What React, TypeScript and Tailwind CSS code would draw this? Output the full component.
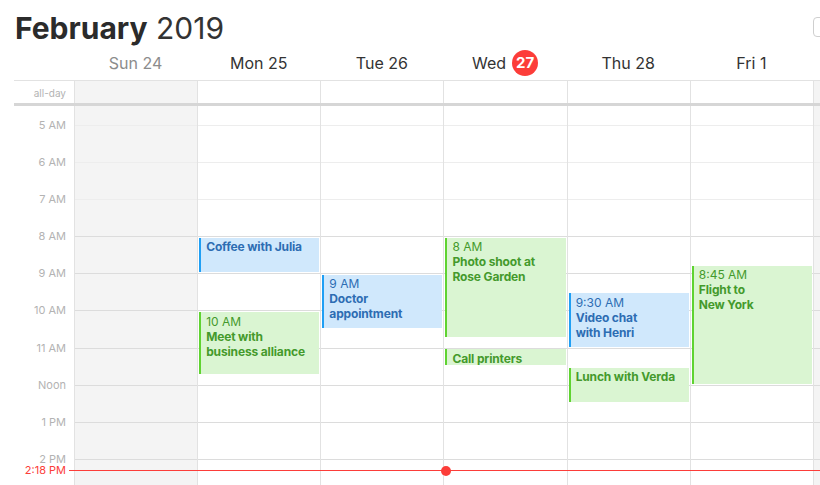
const HOUR = 37.1;
const FIRST_HOUR = 4;

type Ev = {
  day: number;
  start: number;
  end: number;
  title: string[];
  time?: string;
  color: 'blue' | 'green';
};

const events: Ev[] = [
  { day: 1, start: 8, end: 9, title: ['Coffee with Julia'], color: 'blue' },
  { day: 1, start: 10, end: 11.75, time: '10 AM', title: ['Meet with', 'business alliance'], color: 'green' },
  { day: 2, start: 9, end: 10.5, time: '9 AM', title: ['Doctor', 'appointment'], color: 'blue' },
  { day: 3, start: 8, end: 10.75, time: '8 AM', title: ['Photo shoot at', 'Rose Garden'], color: 'green' },
  { day: 3, start: 11, end: 11.5, title: ['Call printers'], color: 'green' },
  { day: 4, start: 9.5, end: 11, time: '9:30 AM', title: ['Video chat', 'with Henri'], color: 'blue' },
  { day: 4, start: 11.5, end: 12.5, title: ['Lunch with Verda'], color: 'green' },
  { day: 5, start: 8.75, end: 12, time: '8:45 AM', title: ['Flight to', 'New York'], color: 'green' },
];

const days = ['Sun 24', 'Mon 25', 'Tue 26', 'Wed', 'Thu 28', 'Fri 1'];
// rows start at 4 AM (scrolled out of view), labels only for the visible ones
const hours = ['', '5 AM', '6 AM', '7 AM', '8 AM', '9 AM', '10 AM', '11 AM', 'Noon', '1 PM', '2 PM', '', ''];

function EventBox({ ev }: { ev: Ev }) {
  const blue = ev.color === 'blue';
  return (
    <div
      className={`absolute left-[1px] right-[1px] border-l-2 pl-[5px] pt-[1.5px] text-[12px] leading-[15px] overflow-hidden ${
        blue ? 'bg-[#d0e8fc] border-[#1f9ff4] text-[#2d6db3]' : 'bg-[#daf5d2] border-[#5fd331] text-[#449a2c]'
      }`}
      style={{
        top: (ev.start - FIRST_HOUR) * HOUR + 1.5,
        height: (ev.end - ev.start) * HOUR - 2.5,
      }}
    >
      {ev.time && <div>{ev.time}</div>}
      {ev.title.map((t) => (
        <div key={t} className="font-bold tracking-[-0.15px]">{t}</div>
      ))}
    </div>
  );
}

export default function App() {
  return (
    <div className="relative w-[820px] h-[485px] overflow-hidden bg-white font-['Inter',sans-serif] text-[#2b2b2b]">
      {/* title + search field */}
      <div className="flex h-[46px]">
        <div className="w-[813px] shrink-0 pl-[15px] pt-[10px] text-[30px] leading-[36px]">
          <span className="font-bold">February</span> <span className="text-[#333]">2019</span>
        </div>
        <div className="mt-[17px] h-[20px] w-[150px] shrink-0 rounded-[4px] border border-[#cfcfcf]" />
      </div>

      {/* day names */}
      <div className="grid h-[34px] grid-cols-[74px_repeat(6,123.17px)_1fr] items-center text-[16px] leading-[20px]">
        <div />
        {days.map((d, i) => (
          <div key={d} className={`flex items-center justify-center gap-[6px] ${i === 0 ? 'text-[#8c8c8c]' : 'text-[#333]'}`}>
            {d}
            {d === 'Wed' && (
              <span className="flex h-[26px] w-[26px] items-center justify-center rounded-full bg-[#fc3d39] text-[15px] font-bold text-white">27</span>
            )}
          </div>
        ))}
        <div />
      </div>

      {/* all-day row */}
      <div className="ml-[14px] grid h-[26px] grid-cols-[60px_repeat(6,123.17px)_1fr] border-t border-b-[3px] border-t-[#e2e2e2] border-b-[#d6d6d6]">
        <div className="pr-[8px] pt-[6px] text-right text-[10px] leading-[12px] text-[#b3b3b3]">all-day</div>
        {days.map((d, i) => (
          <div key={d} className={`border-l border-[#e2e2e2] ${i === 0 ? 'bg-[#f4f4f4]' : ''}`} />
        ))}
        <div className="border-l border-[#e2e2e2] bg-[#f4f4f4]" />
      </div>

      {/* time grid */}
      <div className="h-[379px] overflow-hidden">
        <div className="mt-[-18.1px] grid grid-cols-[74px_repeat(6,123.17px)_1fr]">
          <div>
            {hours.map((h, k) => (
              <div key={k} className="h-[37.1px] pr-[8px] text-right text-[11px] leading-[12px] text-[#b3b3b3]">
                {h && <span className="relative top-[-6px]">{h}</span>}
              </div>
            ))}
          </div>
          {[...days, 'Sat'].map((d, i) => (
            <div key={d} className={`relative border-l border-[#e2e2e2] ${i === 0 || i === 6 ? 'bg-[#f4f4f4]' : ''}`}>
              {hours.map((h, k) => (
                <div key={k} className={`h-[37.1px] border-t ${k < 4 ? 'border-[#ededed]' : 'border-[#dcdcdc]'}`} />
              ))}
              {events.filter((e) => e.day === i).map((e) => (
                <EventBox key={e.title[0]} ev={e} />
              ))}
            </div>
          ))}
        </div>
      </div>

      {/* current time */}
      <div className="absolute left-0 right-0 top-[465px] flex h-[11px] items-center">
        <div className="w-[66px] text-right text-[11px] leading-[11px] text-[#fc3d39]">2:18 PM</div>
        <div className="ml-[3px] h-[1.5px] flex-1 bg-[#fc3d39]" />
        <div className="absolute left-[441px] top-[0.5px] h-[10px] w-[10px] rounded-full bg-[#fc3d39]" />
      </div>
    </div>
  );
}
